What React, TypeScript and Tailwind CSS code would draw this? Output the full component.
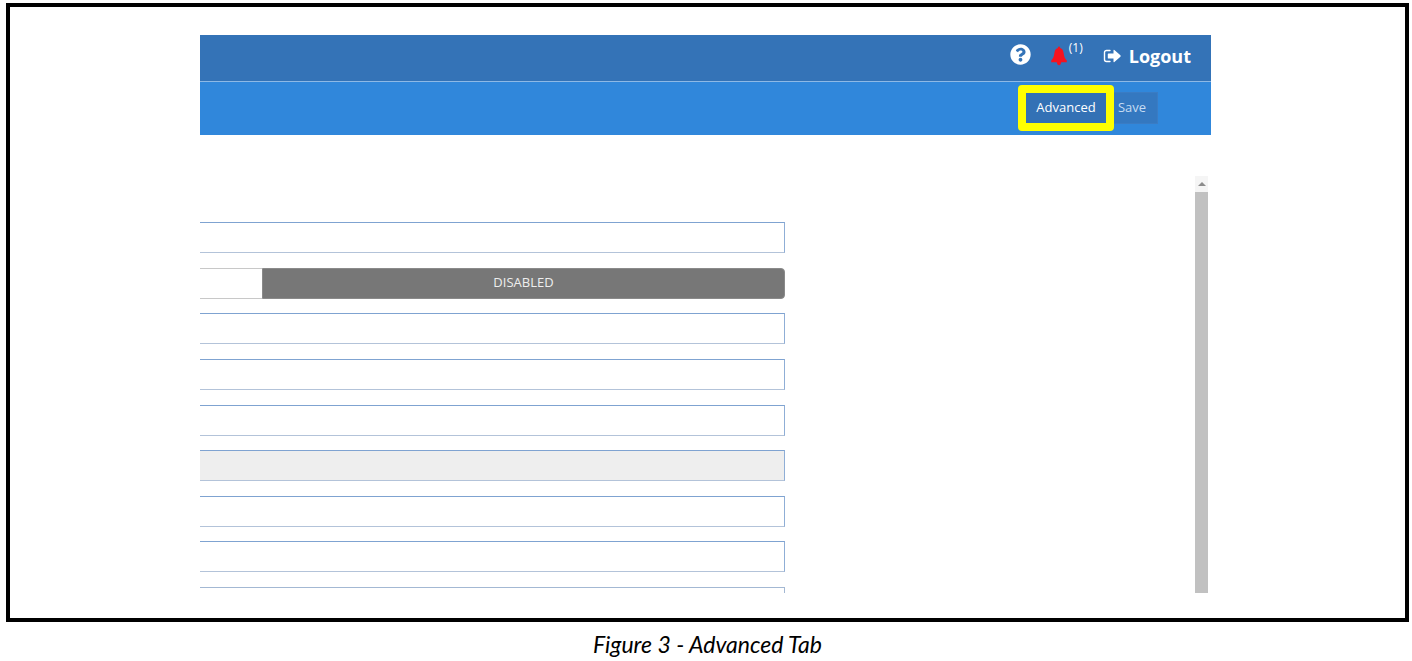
import { FaQuestionCircle } from "react-icons/fa";
import clsx from "clsx";

const fields = [
  { id: "field-1", readOnly: false },
  { id: "toggle", toggle: true },
  { id: "field-2", readOnly: false },
  { id: "field-3", readOnly: false },
  { id: "field-4", readOnly: false },
  { id: "field-5", readOnly: true },
  { id: "field-6", readOnly: false },
  { id: "field-7", readOnly: false },
];

function BellIcon() {
  return (
    <svg viewBox="0 0 16 20" className="h-5 w-4 text-[#f5131f]" aria-hidden="true">
      <path
        d="M8 .6q1 0 1.200 1.300c2.200.6 3.100 2.500 3.400 5 .4 3.200 1.200 5.400 3.200 7.600v1.700H.2v-1.700c2-2.200 2.800-4.400 3.200-7.600.3-2.500 1.200-4.400 3.400-5Q7 .6 8 .6z"
        fill="currentColor"
      />
      <path d="M5.800 16h4.400q-.4 3.200-2.200 3.200T5.800 16z" fill="currentColor" />
    </svg>
  );
}

function SignOutIcon() {
  return (
    <svg viewBox="0 0 18 14" className="h-3.5 w-[18px]" aria-hidden="true">
      <path
        d="M7 1.5H3.5a2 2 0 0 0-2 2v7a2 2 0 0 0 2 2H7"
        fill="none"
        stroke="currentColor"
        strokeWidth="1.4"
        strokeLinecap="round"
      />
      <path
        d="M5.5 4.4h5V1.6q0-1.200.9-.6l6 5.300q.6.700 0 1.400l-6 5.300q-.9.600-.9-.6V9.600h-5q-.7 0-.7-.7V5.100q0-.7.7-.7z"
        fill="currentColor"
      />
    </svg>
  );
}

function TopBar() {
  return (
    <header className="flex h-[46px] items-center justify-end bg-[#3473b7] pr-5 pb-1 text-white">
      <button type="button" aria-label="Help" className="mr-5 pb-1">
        <FaQuestionCircle size={21} />
      </button>
      <button type="button" aria-label="Notifications" className="mr-5 flex items-start">
        <BellIcon />
        <sup className="top-0 -mt-1.5 ml-0.5 text-xs leading-4">(1)</sup>
      </button>
      <a href="#logout" className="flex items-center gap-2 text-lg font-bold">
        <SignOutIcon />
        Logout
      </a>
    </header>
  );
}

function ActionBar() {
  return (
    <div className="flex h-[54px] items-center justify-end border-t border-[#8db9e6] bg-[#3087db] pr-[53px] pb-0.5 text-[13px] text-white">
      <div className="relative z-10">
        <button type="button" className="h-[30px] w-20 bg-[#3371b5]">
          Advanced
        </button>
        <span className="pointer-events-none absolute -inset-2 rounded-sm border-8 border-[#ffff00]" />
      </div>
      <button type="button" className="h-8 w-[52px] border border-[#3a7cc4] bg-[#3478c0] text-[#c5dcf3]">
        Save
      </button>
    </div>
  );
}

function ToggleRow() {
  return (
    <div className="flex h-[31px]">
      <button type="button" aria-label="Enabled" className="w-[62px] border-y border-[#c8c8c8] bg-white" />
      <button type="button" className="flex-1 rounded-r border border-[#8a8a8a] bg-[#777777] text-[13px] text-[#eeeeee]">
        DISABLED
      </button>
    </div>
  );
}

function ScrollBar() {
  return (
    <div className="mr-[3px] flex w-[13px] flex-col">
      <div className="flex h-4 items-center justify-center bg-[#f5f5f5]">
        <svg viewBox="0 0 8 4" className="h-1 w-2" aria-hidden="true">
          <path d="M0 4 4 0l4 4z" fill="#8c8c8c" />
        </svg>
      </div>
      <div className="flex-1 bg-[#c1c1c1]" />
    </div>
  );
}

export default function App() {
  return (
    <figure className="mt-[3px] mr-[3px] ml-1.5 font-['Open_Sans',sans-serif]">
      <div className="border-4 border-black bg-white pt-7 pr-[194px] pb-[25px] pl-[190px]">
        <TopBar />
        <ActionBar />
        <main className="mt-[41px] flex">
          <form className="mt-[46px] mr-[410px] flex h-[371px] flex-1 flex-col justify-between">
            {fields.map((field) =>
              field.toggle ? (
                <ToggleRow key={field.id} />
              ) : (
                <input
                  key={field.id}
                  type="text"
                  aria-label={field.id}
                  readOnly={field.readOnly}
                  className={clsx(
                    "h-[31px] w-full border border-l-0 border-t-[#7fa3d1] border-r-[#8faed6] border-b-[#b3c3d9] px-3 text-sm outline-none",
                    field.readOnly ? "bg-[#eeeeee]" : "bg-white"
                  )}
                />
              )
            )}
            {/* next row, cut off by the bottom of the pane */}
            <div className="h-1.5 border-t border-r border-[#a3b8d3]" />
          </form>
          <ScrollBar />
        </main>
      </div>
      <figcaption className="mt-1.5 text-center font-[Lato,sans-serif] text-[23px] leading-8 text-black italic">
        Figure 3 - Advanced Tab
      </figcaption>
    </figure>
  );
}
